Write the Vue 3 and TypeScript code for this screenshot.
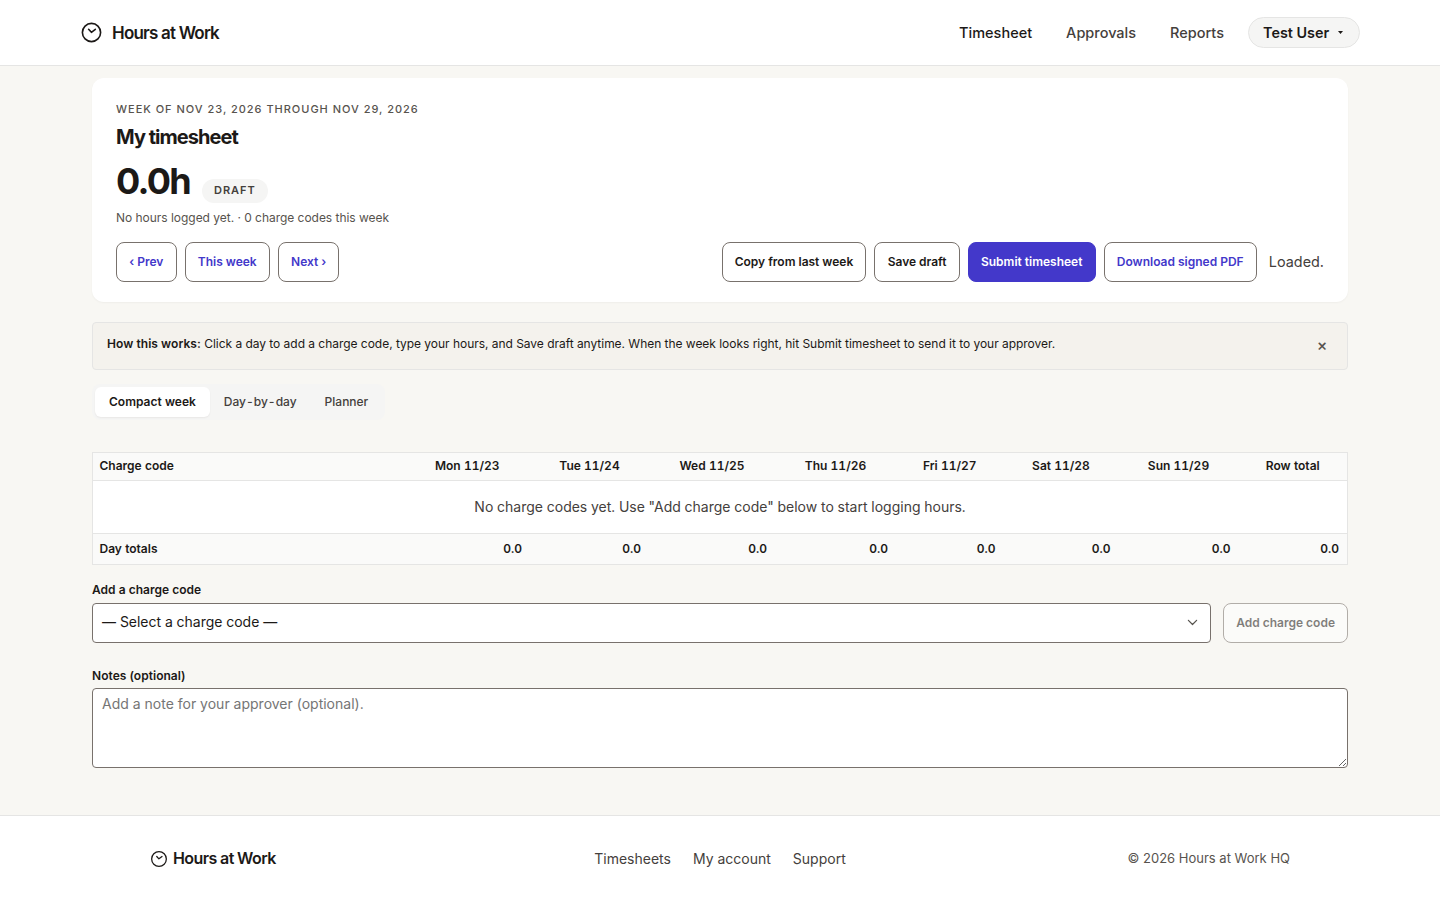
<script setup lang="ts">
import { ref } from 'vue'

interface Day { label: string; total: string }

const days: Day[] = [
  { label: 'Mon 11/23', total: '0.0' },
  { label: 'Tue 11/24', total: '0.0' },
  { label: 'Wed 11/25', total: '0.0' },
  { label: 'Thu 11/26', total: '0.0' },
  { label: 'Fri 11/27', total: '0.0' },
  { label: 'Sat 11/28', total: '0.0' },
  { label: 'Sun 11/29', total: '0.0' },
]
const views = ['Compact week', 'Day-by-day', 'Planner']
const activeView = ref('Compact week')
const showHelp = ref(true)
const notes = ref('')
</script>

<template>
  <div class="page">
    <header class="topbar">
      <div class="topbar-inner">
        <a class="brand">
          <svg class="brand-icon" viewBox="0 0 24 24" fill="none" stroke="currentColor" stroke-width="1.7" stroke-linecap="round" stroke-linejoin="round">
            <circle cx="12" cy="12" r="9.5" />
            <path d="M9 8.6 11.9 11.8 16 8.7" />
          </svg>
          <span>Hours at Work</span>
        </a>
        <nav class="nav">
          <a class="nav-link current">Timesheet</a>
          <a class="nav-link">Approvals</a>
          <a class="nav-link">Reports</a>
          <button class="user" type="button">
            <span>Test User</span>
            <svg class="caret" viewBox="0 0 5 3"><path d="M0 0h5L2.5 3z" fill="currentColor" /></svg>
          </button>
        </nav>
      </div>
    </header>

    <main class="main">
      <section class="hero">
        <p class="eyebrow">Week of Nov 23, 2026 through Nov 29, 2026</p>
        <h1 class="title">My timesheet</h1>
        <div class="total-row">
          <span class="total">0.0h</span>
          <span class="status">Draft</span>
        </div>
        <p class="summary">No hours logged yet. · 0 charge codes this week</p>
        <div class="actions">
          <div class="group">
            <button class="btn link" type="button">‹ Prev</button>
            <button class="btn link" type="button">This week</button>
            <button class="btn link" type="button">Next ›</button>
          </div>
          <div class="group">
            <button class="btn" type="button">Copy from last week</button>
            <button class="btn" type="button">Save draft</button>
            <button class="btn primary" type="button">Submit timesheet</button>
            <button class="btn link" type="button">Download signed PDF</button>
            <span class="loaded">Loaded.</span>
          </div>
        </div>
      </section>

      <aside v-if="showHelp" class="help">
        <p><strong>How this works:</strong> Click a day to add a charge code, type your hours, and Save draft anytime. When the week looks right, hit Submit timesheet to send it to your approver.</p>
        <button class="dismiss" type="button" @click="showHelp = false">×</button>
      </aside>

      <div class="tabs">
        <button
          v-for="v in views"
          :key="v"
          type="button"
          class="tab"
          :class="{ active: v === activeView }"
          @click="activeView = v"
        >{{ v }}</button>
      </div>

      <table class="grid">
        <colgroup>
          <col class="c-code"><col class="c-mon"><col class="c-tue"><col class="c-wed"><col class="c-thu"><col class="c-fri"><col class="c-sat"><col class="c-sun"><col class="c-total">
        </colgroup>
        <thead>
          <tr>
            <th class="left">Charge code</th>
            <th v-for="d in days" :key="d.label">{{ d.label }}</th>
            <th>Row total</th>
          </tr>
        </thead>
        <tbody>
          <tr><td colspan="9" class="empty">No charge codes yet. Use "Add charge code" below to start logging hours.</td></tr>
        </tbody>
        <tfoot>
          <tr>
            <th class="left">Day totals</th>
            <td v-for="d in days" :key="d.label">{{ d.total }}</td>
            <td>0.0</td>
          </tr>
        </tfoot>
      </table>

      <label class="label" for="code">Add a charge code</label>
      <div class="add-row">
        <div class="select" id="code">
          <span>— Select a charge code —</span>
          <svg class="chevron" viewBox="0 0 12 12" fill="none" stroke="currentColor" stroke-width="1.2" stroke-linecap="round" stroke-linejoin="round"><path d="M2.4 4.3 6.5 8.5l4.1-4.2" /></svg>
        </div>
        <button class="btn disabled" type="button" disabled>Add charge code</button>
      </div>

      <label class="label notes-label" for="notes">Notes (optional)</label>
      <textarea id="notes" v-model="notes" class="notes" placeholder="Add a note for your approver (optional)."></textarea>
    </main>

    <footer class="footer">
      <div class="footer-inner">
        <a class="brand small">
          <svg class="brand-icon" viewBox="0 0 24 24" fill="none" stroke="currentColor" stroke-width="1.7" stroke-linecap="round" stroke-linejoin="round">
            <circle cx="12" cy="12" r="9.8" />
            <path d="M9 8.6 11.9 11.8 16 8.7" />
          </svg>
          <span>Hours at Work</span>
        </a>
        <nav class="footer-nav">
          <a>Timesheets</a>
          <a>My account</a>
          <a>Support</a>
        </nav>
        <span class="copyright">© 2026 Hours at Work HQ</span>
      </div>
    </footer>
  </div>
</template>

<style>
body {
  background: #f8f7f3;
}
</style>

<style scoped>
.page, .page * {
  box-sizing: border-box;
}
.page {
  min-height: 900px;
  display: flex;
  flex-direction: column;
  font-family: Inter, "Liberation Sans", sans-serif;
  font-size: 14px;
  line-height: 1.5;
  color: #1c1917;
  background: #f8f7f3;
}
p, h1 {
  margin: 0;
}
button {
  font-family: inherit;
  color: inherit;
}
.topbar {
  height: 66px;
  background: #fff;
  border-bottom: 1px solid #e5e5e4;
}
.topbar-inner {
  height: 65px;
  margin: 0 80px;
  display: flex;
  align-items: center;
  justify-content: space-between;
}
.brand {
  display: flex;
  align-items: center;
  gap: 9px;
  font-size: 17px;
  font-weight: 600;
  letter-spacing: -0.8px;
}
.brand-icon {
  width: 23px;
  height: 23px;
}
.brand span {
  padding-top: 2px;
}
.nav {
  display: flex;
  align-items: center;
}
.nav-link {
  padding-top: 1px;
  font-size: 14.5px;
  font-weight: 500;
  color: #44403c;
  margin-right: 34px;
}
.nav-link.current {
  color: #1c1917;
}
.nav-link:nth-child(3) {
  margin-right: 24px;
}
.user {
  height: 31px;
  width: 112px;
  padding: 0 14px;
  display: flex;
  align-items: center;
  gap: 9px;
  font-size: 14.4px;
  font-weight: 600;
  border: 1px solid #e5e5e4;
  border-radius: 16px;
  background: #f5f5f4;
}
.user span {
  white-space: nowrap;
}
.caret {
  width: 5px;
  height: 3px;
  flex: none;
}
.main {
  width: 1256px;
  margin: 12px auto 0;
  display: flex;
  flex-direction: column;
}
.hero {
  height: 224px;
  padding: 22px 24px 20px;
  background: #fff;
  border-radius: 12px;
  box-shadow: 0 1px 2px rgba(28, 25, 23, 0.04);
}
.eyebrow {
  font-size: 11px;
  line-height: 18px;
  font-weight: 500;
  letter-spacing: 0.98px;
  text-transform: uppercase;
  color: #57534e;
}
.title {
  margin-top: 5px;
  font-size: 20px;
  line-height: 28px;
  font-weight: 700;
  letter-spacing: -0.96px;
}
.total-row {
  height: 52px;
  display: flex;
  align-items: flex-end;
  gap: 12px;
}
.total {
  font-size: 36px;
  line-height: 46px;
  font-weight: 700;
  letter-spacing: -1.7px;
  margin-bottom: -1px;
}
.status {
  height: 24px;
  padding: 0 12px;
  border-radius: 12px;
  background: #f5f5f4;
  color: #44403c;
  font-size: 11px;
  line-height: 22px;
  font-weight: 600;
  letter-spacing: 0.95px;
  text-transform: uppercase;
}
.summary {
  margin-top: 5px;
  font-size: 12px;
  line-height: 19px;
  letter-spacing: -0.03px;
  color: #57534e;
}
.actions {
  margin-top: 15px;
  display: flex;
  justify-content: space-between;
}
.group {
  display: flex;
  align-items: center;
  gap: 8px;
}
.btn {
  height: 40px;
  padding: 0 12.2px 1px;
  border: 1px solid #78716c;
  border-radius: 8px;
  background: #fff;
  font-size: 12px;
  font-weight: 600;
  white-space: nowrap;
}
.btn.link {
  color: #4338ca;
}
.btn.primary {
  background: #4338ca;
  border-color: #4338ca;
  color: #fff;
}
.btn.disabled {
  padding: 0 12px 2px;
  opacity: 0.55;
}
.loaded {
  margin-left: 4px;
  font-size: 14.4px;
  color: #44403c;
}
.help {
  height: 48px;
  margin-top: 20px;
  padding: 0 13px 0 14px;
  display: flex;
  align-items: center;
  justify-content: space-between;
  font-size: 12px;
  letter-spacing: -0.032px;
  background: #f4f2ed;
  border: 1px solid #e5e5e4;
  border-radius: 4px;
}
.help p {
  margin-bottom: 4px;
}
.help strong {
  font-weight: 600;
  letter-spacing: 0.06px;
}
.dismiss {
  padding: 0 0 2px;
  width: 24px;
  border: 0;
  background: none;
  color: #57534e;
  font-size: 16px;
  font-weight: 500;
}
.tabs {
  align-self: flex-start;
  height: 36px;
  margin-top: 14px;
  padding: 3px;
  display: flex;
  background: #f5f5f4;
  border-radius: 8px;
}
.tab {
  height: 30px;
  padding: 0 14px 2px;
  border: 0;
  border-radius: 6px;
  background: transparent;
  color: #44403c;
  font-size: 12px;
  font-weight: 500;
  font-variant-numeric: tabular-nums;
}
.tab.active {
  background: #fff;
  color: #1c1917;
  font-weight: 600;
  box-shadow: 0 1px 2px rgba(28, 25, 23, 0.06);
}
.grid {
  width: 1256px;
  height: 113px;
  margin-top: 32px;
  table-layout: fixed;
  border-collapse: collapse;
  border: 1px solid #e5e5e4;
  background: #fff;
  font-size: 12px;
  font-variant-numeric: tabular-nums;
}
.c-code { width: 312px; }
.c-mon { width: 125.5px; }
.c-tue { width: 119px; }
.c-wed { width: 126px; }
.c-thu { width: 121px; }
.c-fri { width: 107.5px; }
.c-sat { width: 115px; }
.c-sun { width: 120px; }
.c-total { width: 109px; }
.grid th, .grid td {
  padding: 0 7.5px;
  font-weight: 600;
}
.grid thead tr {
  height: 28px;
  background: #fafaf9;
}
.grid thead th {
  padding-bottom: 1px;
}
.grid tfoot tr {
  height: 31px;
  background: #fafaf9;
  border-top: 1px solid #e5e5e4;
}
.grid tfoot td {
  padding-right: 8px;
  text-align: right;
}
.grid tbody tr {
  height: 53px;
  border-top: 1px solid #e5e5e4;
}
.grid th.left {
  padding-left: 6.5px;
  text-align: left;
}
.grid .empty {
  padding-bottom: 2px;
  text-align: center;
  font-size: 14px;
  font-weight: 400;
  color: #44403c;
}
.label {
  margin-top: 15px;
  font-size: 12px;
  line-height: 20px;
  font-weight: 600;
  letter-spacing: 0.03px;
}
.add-row {
  margin-top: 3px;
  display: flex;
  gap: 12px;
}
.select {
  flex: 1;
  height: 40px;
  padding: 0 12px 3px 9px;
  display: flex;
  align-items: center;
  justify-content: space-between;
  letter-spacing: -0.03px;
  border: 1px solid #78716c;
  border-radius: 4px;
  background: #fff;
}
.chevron {
  width: 12px;
  height: 12px;
  color: #57534e;
}
.notes-label {
  margin-top: 23px;
}
.notes {
  width: 100%;
  height: 80px;
  margin: 2px 0 0;
  padding: 4px 9px;
  border: 1px solid #78716c;
  border-radius: 4px;
  background: #fff;
  color: inherit;
  font: inherit;
  resize: vertical;
}
.notes::placeholder {
  color: #757575;
}
.footer {
  height: 85px;
  margin-top: 47px;
  background: #fff;
  border-top: 1px solid #e5e5e4;
}
.footer-inner {
  height: 86px;
  margin: 0 150px;
  display: grid;
  grid-template-columns: 1fr auto 1fr;
  align-items: center;
}
.brand.small {
  gap: 5px;
  font-size: 16px;
  letter-spacing: -0.6px;
}
.brand.small span {
  padding: 0 0 2px;
}
.small .brand-icon {
  width: 18px;
  height: 18px;
}
.footer-nav {
  padding-bottom: 2px;
  display: flex;
  gap: 22px;
  color: #44403c;
}
.copyright {
  justify-self: end;
  font-size: 13px;
  color: #57534e;
}
</style>
